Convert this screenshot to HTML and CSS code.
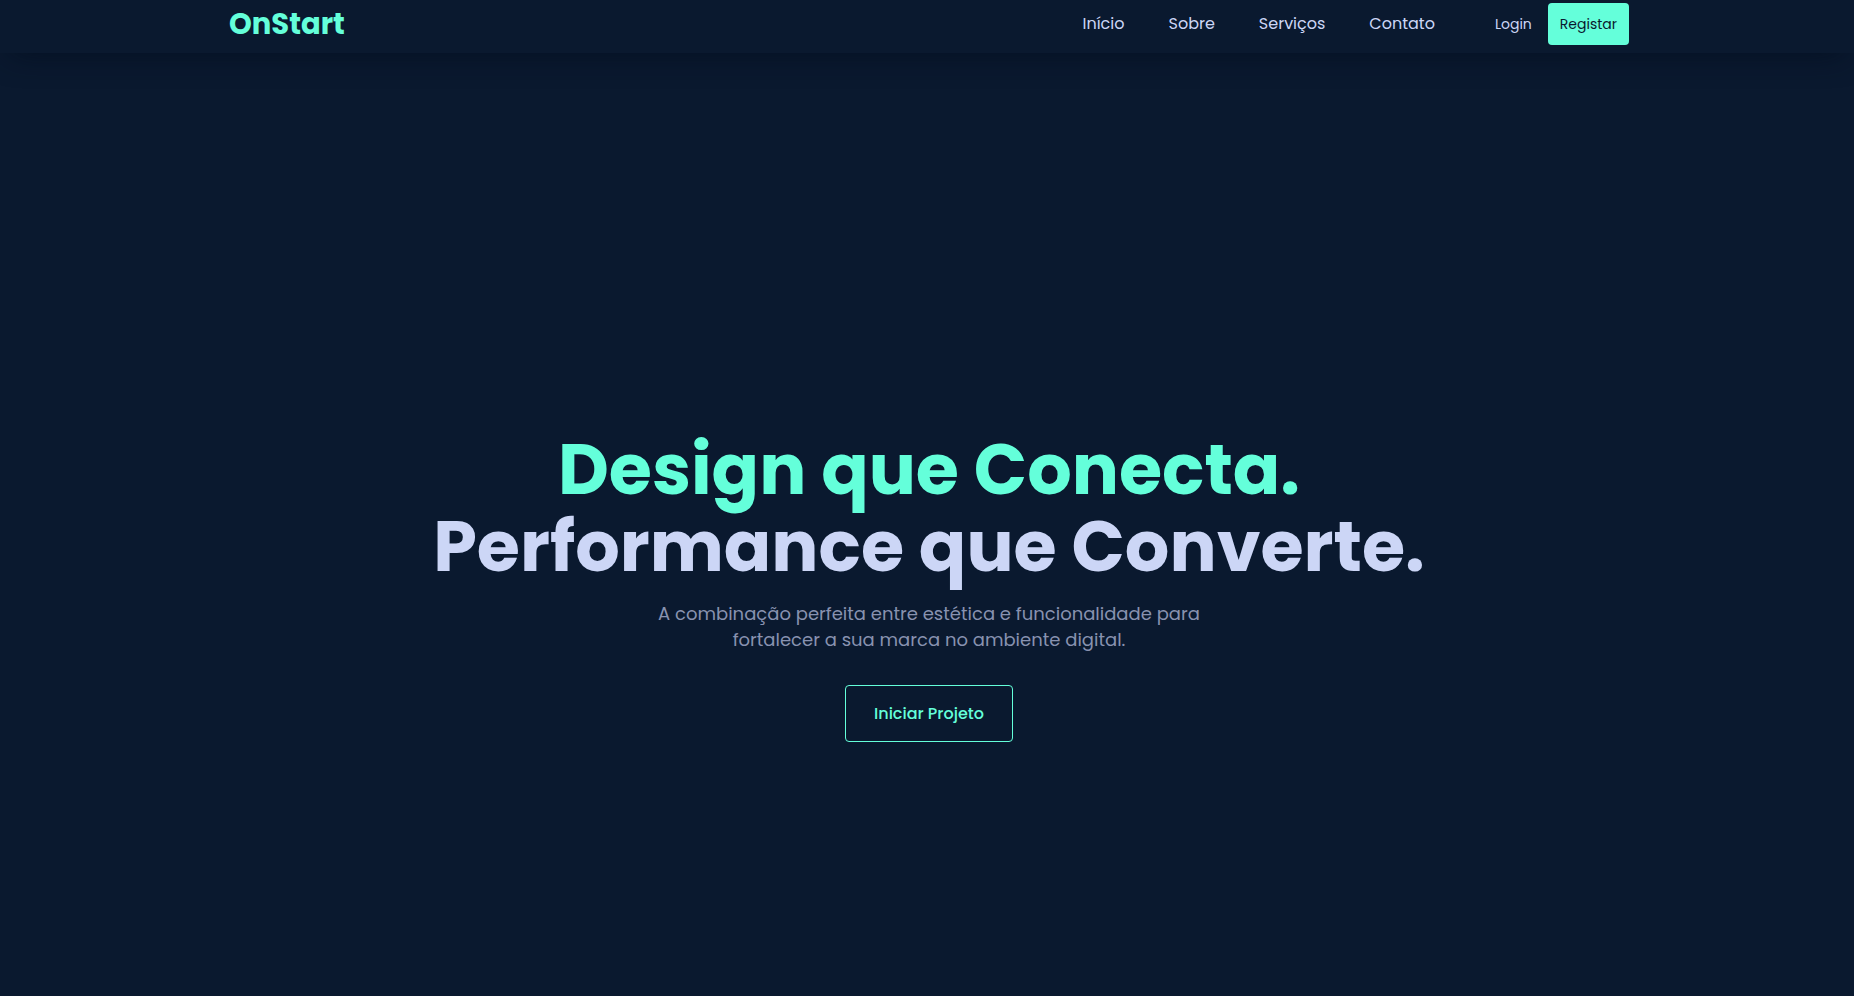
FILE: index.html
```
<!DOCTYPE html>
<html lang="pt">
<head>
  <meta charset="utf-8">
  <meta name="viewport" content="width=device-width, initial-scale=1">
  <title>OnStart</title>
  <link rel="stylesheet" href="styles.css">
</head>
<body>
  <header class="header">
    <div class="header-inner">
      <a class="logo" href="#">OnStart</a>
      <div class="header-menu">
        <nav class="nav">
          <a class="nav-link" href="#inicio">Início</a>
          <a class="nav-link" href="#sobre">Sobre</a>
          <a class="nav-link" href="#servicos">Serviços</a>
          <a class="nav-link" href="#contato">Contato</a>
        </nav>
        <div class="auth">
          <a class="login" href="#login">Login</a>
          <button class="register" type="button">Registar</button>
        </div>
      </div>
    </div>
  </header>
  <main class="hero" id="inicio">
    <h1 class="hero-title"><span class="hero-line hero-accent">Design que Conecta.</span> <span class="hero-line">Performance que Converte.</span></h1>
    <p class="hero-text">A combinação perfeita entre estética e funcionalidade para fortalecer a sua marca no ambiente digital.</p>
    <button class="hero-button" type="button">Iniciar Projeto</button>
  </main>
</body>
</html>
```
FILE: styles.css
```
:root {
  --navy: #0a192f;
  --green: #64ffda;
  --light: #ccd6f6;
  --slate: #8892b0;
}

* {
  box-sizing: border-box;
  margin: 0;
}

body {
  display: flex;
  flex-direction: column;
  min-height: 100vh;
  background: var(--navy);
  color: var(--light);
  font-family: Poppins, Montserrat, Inter, sans-serif;
  font-size: 16px;
}

a {
  color: inherit;
  text-decoration: none;
}

button {
  font-family: inherit;
  border-radius: 4px;
  cursor: pointer;
}

.header {
  padding: 3px 20px 8px 24px;
  background: var(--navy);
  box-shadow: 0 10px 30px -10px rgba(2, 12, 27, 0.7);
}

.header-inner {
  display: flex;
  align-items: center;
  justify-content: space-between;
  max-width: 1400px;
  margin: 0 auto;
}

.logo {
  color: var(--green);
  font-size: 29px;
  font-weight: 700;
  line-height: 40px;
}

.header-menu {
  display: flex;
  align-items: center;
  gap: 60px;
}

.nav {
  display: flex;
  gap: 44px;
}

.nav-link {
  line-height: 24px;
}

.auth {
  display: flex;
  align-items: center;
  gap: 16px;
  font-size: 14px;
}

.register {
  padding: 10px 12px;
  border: 0;
  background: var(--green);
  color: var(--navy);
  font-size: 14px;
  line-height: 22px;
}

.hero {
  display: flex;
  flex: 1;
  flex-direction: column;
  align-items: center;
  justify-content: center;
  padding: 123px 20px 0 24px;
  text-align: center;
}

.hero-title {
  font-size: 70px;
  font-weight: 700;
  line-height: 77px;
}

.hero-line {
  display: block;
}

.hero-accent {
  color: var(--green);
}

.hero-text {
  max-width: 600px;
  margin: 16px 0 32px;
  color: var(--slate);
  font-size: 18px;
  line-height: 26px;
}

.hero-button {
  padding: 15px 28px;
  border: 1px solid var(--green);
  background: transparent;
  color: var(--green);
  font-size: 16px;
  font-weight: 500;
  line-height: 25px;
}
```
